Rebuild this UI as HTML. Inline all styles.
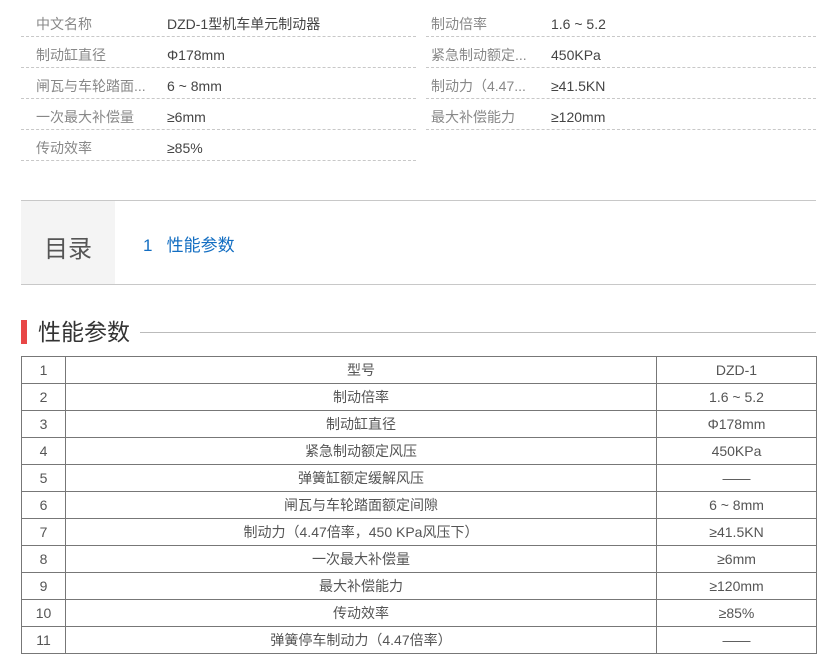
<!DOCTYPE html>
<html><head><meta charset="utf-8"><style>
body{margin:0;width:829px;height:664px;background:#fff;font-family:"Liberation Sans","Noto Sans CJK SC",sans-serif;position:relative;overflow:hidden}
.r{position:absolute;height:31px;border-bottom:1px dashed #c8c8c8;font-size:14px;line-height:38px}
.r .l{position:absolute;left:15px;color:#888;white-space:nowrap}
.r .v{position:absolute;color:#444;white-space:nowrap}
.L{left:21px;width:395px}.L .v{left:146px}
.R{left:426px;width:390px}.R .l{left:5px}.R .v{left:125px}
table{position:absolute;left:21px;top:356px;width:796px;border-collapse:collapse;font-size:14px;color:#555}
td{border:1px solid #777;height:26px;padding:0;text-align:center;line-height:26px}
</style></head><body>
<div class="r L" style="top:5px"><span class="l">中文名称</span><span class="v">DZD-1型机车单元制动器</span></div>
<div class="r L" style="top:36px"><span class="l">制动缸直径</span><span class="v">Φ178mm</span></div>
<div class="r L" style="top:67px"><span class="l">闸瓦与车轮踏面...</span><span class="v">6 ~ 8mm</span></div>
<div class="r L" style="top:98px"><span class="l">一次最大补偿量</span><span class="v">≥6mm</span></div>
<div class="r L" style="top:129px"><span class="l">传动效率</span><span class="v">≥85%</span></div>
<div class="r R" style="top:5px"><span class="l">制动倍率</span><span class="v">1.6 ~ 5.2</span></div>
<div class="r R" style="top:36px"><span class="l">紧急制动额定...</span><span class="v">450KPa</span></div>
<div class="r R" style="top:67px"><span class="l">制动力（4.47...</span><span class="v">≥41.5KN</span></div>
<div class="r R" style="top:98px"><span class="l">最大补偿能力</span><span class="v">≥120mm</span></div>

<div style="position:absolute;left:21px;top:200px;width:795px;height:83px;border-top:1px solid #c8c8c8;border-bottom:1px solid #c8c8c8"></div>
<div style="position:absolute;left:21px;top:201px;width:94px;height:83px;background:#f4f4f4;font-size:24px;color:#555;text-align:center;line-height:98px">目录</div>
<div style="position:absolute;left:143px;top:231px;font-size:17px;color:#136ec2;white-space:nowrap">1&nbsp;&nbsp;&nbsp;性能参数</div>

<div style="position:absolute;left:21px;top:320px;width:6px;height:24px;background:#e84646"></div>
<div style="position:absolute;left:38px;top:316px;font-size:23px;color:#333;line-height:32px">性能参数</div>
<div style="position:absolute;left:140px;top:332px;width:676px;border-top:1px solid #bbb"></div>

<table>
<colgroup><col style="width:44px"><col style="width:591px"><col></colgroup>
<tr><td>1</td><td>型号</td><td>DZD-1</td></tr>
<tr><td>2</td><td>制动倍率</td><td>1.6 ~ 5.2</td></tr>
<tr><td>3</td><td>制动缸直径</td><td>Φ178mm</td></tr>
<tr><td>4</td><td>紧急制动额定风压</td><td>450KPa</td></tr>
<tr><td>5</td><td>弹簧缸额定缓解风压</td><td>——</td></tr>
<tr><td>6</td><td>闸瓦与车轮踏面额定间隙</td><td>6 ~ 8mm</td></tr>
<tr><td>7</td><td>制动力（4.47倍率，450 KPa风压下）</td><td>≥41.5KN</td></tr>
<tr><td>8</td><td>一次最大补偿量</td><td>≥6mm</td></tr>
<tr><td>9</td><td>最大补偿能力</td><td>≥120mm</td></tr>
<tr><td>10</td><td>传动效率</td><td>≥85%</td></tr>
<tr><td>11</td><td>弹簧停车制动力（4.47倍率）</td><td>——</td></tr>
</table>
</body></html>
